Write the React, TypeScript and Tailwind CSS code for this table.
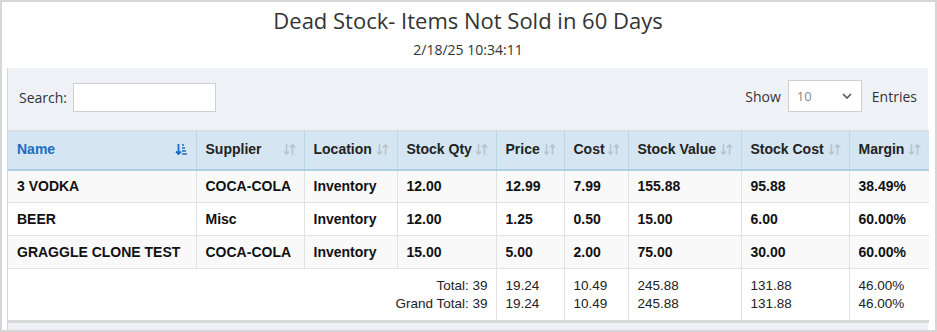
import React from 'react';

type Row = {
  name: string;
  supplier: string;
  location: string;
  qty: string;
  price: string;
  cost: string;
  value: string;
  stockCost: string;
  margin: string;
};

const rows: Row[] = [
  { name: '3 VODKA', supplier: 'COCA-COLA', location: 'Inventory', qty: '12.00', price: '12.99', cost: '7.99', value: '155.88', stockCost: '95.88', margin: '38.49%' },
  { name: 'BEER', supplier: 'Misc', location: 'Inventory', qty: '12.00', price: '1.25', cost: '0.50', value: '15.00', stockCost: '6.00', margin: '60.00%' },
  { name: 'GRAGGLE CLONE TEST', supplier: 'COCA-COLA', location: 'Inventory', qty: '15.00', price: '5.00', cost: '2.00', value: '75.00', stockCost: '30.00', margin: '60.00%' },
];

const columns = [
  { label: 'Name', width: 'w-[188px]' },
  { label: 'Supplier', width: 'w-[108px]' },
  { label: 'Location', width: 'w-[93px]' },
  { label: 'Stock Qty', width: 'w-[99px]' },
  { label: 'Price', width: 'w-[68px]' },
  { label: 'Cost', width: 'w-[64px]' },
  { label: 'Stock Value', width: 'w-[113px]' },
  { label: 'Stock Cost', width: 'w-[108px]' },
  { label: 'Margin', width: 'w-[80px]' },
];

function SortBoth() {
  return (
    <svg width="13" height="13" viewBox="0 0 13 13" className="shrink-0">
      <path d="M3.5 1v10M1 8.5l2.5 2.5 2.5-2.5" stroke="#b9c3cc" strokeWidth="1.6" fill="none" />
      <path d="M9.5 12V2M7 4.5l2.5-2.5 2.5 2.5" stroke="#b9c3cc" strokeWidth="1.6" fill="none" />
    </svg>
  );
}

function SortDown() {
  return (
    <svg width="13" height="13" viewBox="0 0 13 13" className="shrink-0">
      <path d="M3.5 1v10M1 8.5l2.5 2.5 2.5-2.5" stroke="#1a6cc4" strokeWidth="1.8" fill="none" />
      <path d="M7 2h2M7 5h3M7 8h4M7 11h5" stroke="#1a6cc4" strokeWidth="1.6" />
    </svg>
  );
}

export default function App() {
  return (
    <div className="w-[937px] h-[332px] overflow-hidden bg-white border-2 border-[#d6d6d6] pl-[5px] pr-[6px] font-['Liberation_Sans',Arial,sans-serif]">
      <div className="h-[66px] flex flex-col items-center font-['Open_Sans',sans-serif] text-[#333]">
        <h1 className="text-[22px] leading-[30px] mt-[3px]">Dead Stock- Items Not Sold in 60 Days</h1>
        <div className="text-[14px] leading-[20px] mt-[5px]">2/18/25 10:34:11</div>
      </div>
      <div className="bg-[#eef2f7] w-[921px] h-[262px] border-l border-[#d8d8d8]">
        <div className="h-[62px] flex items-center justify-between pl-[11px] pr-[11px] font-['Open_Sans',sans-serif] text-[14px] text-[#333]">
          <label className="flex items-center gap-[6px] -mt-[3px]">
            <span>Search:</span>
            <input className="w-[143px] h-[29px] bg-white border border-[#cfcfcf] outline-none" />
          </label>
          <div className="flex items-center -mt-[6px]">
            <span>Show</span>
            <div className="ml-[7px] w-[74px] h-[32px] bg-white border border-[#cfcfcf] flex items-center justify-between pl-[8px] pr-[9px] text-[13px] text-[#888]">
              <span className="mt-[2px]">10</span>
              <svg width="10" height="6" viewBox="0 0 10 6">
                <path d="M1 1l4 4 4-4" stroke="#555" strokeWidth="1.6" fill="none" />
              </svg>
            </div>
            <span className="ml-[10px]">Entries</span>
          </div>
        </div>
        <table className="w-[921px] table-fixed border-collapse text-[14px] text-[#111]">
          <colgroup>
            {columns.map((c) => (
              <col key={c.label} className={c.width} />
            ))}
          </colgroup>
          <thead>
            <tr className="h-[39px] bg-[#d5e6f2] border-t border-[#dcdcdc] border-b-2 border-b-[#acd0e8]">
              {columns.map((c, i) => (
                <th key={c.label} className="border-r border-[#bcd6ea] last:border-r-0 pl-[9px] pr-[8px] text-left font-bold text-[14px]">
                  <div className="flex items-center justify-between">
                    <span className={i === 0 ? 'text-[#1a6cc4]' : 'text-[#222]'}>{c.label}</span>
                    {i === 0 ? <SortDown /> : <SortBoth />}
                  </div>
                </th>
              ))}
            </tr>
          </thead>
          <tbody>
            {rows.map((r, idx) => (
              <tr key={r.name} className={`h-[33px] font-bold border-b border-[#e2e2e2] ${idx % 2 === 0 ? 'bg-[#f9f9f9]' : 'bg-white'}`}>
                {[r.name, r.supplier, r.location, r.qty, r.price, r.cost, r.value, r.stockCost, r.margin].map((v, i) => (
                  <td key={i} className="pl-[9px] border-r border-[#e2e2e2] last:border-r-0">
                    {v}
                  </td>
                ))}
              </tr>
            ))}
            <tr className="h-[53px] bg-white border-b-[3px] border-[#d9d9d9] leading-[18px] text-[13.5px] text-[#222]">
              <td colSpan={4} className="text-right pr-[8px] border-r border-[#e2e2e2]">
                <div>Total: 39</div>
                <div>Grand Total: 39</div>
              </td>
              {['19.24', '10.49', '245.88', '131.88', '46.00%'].map((v, i) => (
                <td key={i} className="pl-[9px] border-r border-[#e2e2e2] last:border-r-0">
                  <div>{v}</div>
                  <div>{v}</div>
                </td>
              ))}
            </tr>
          </tbody>
        </table>
      </div>
    </div>
  );
}
